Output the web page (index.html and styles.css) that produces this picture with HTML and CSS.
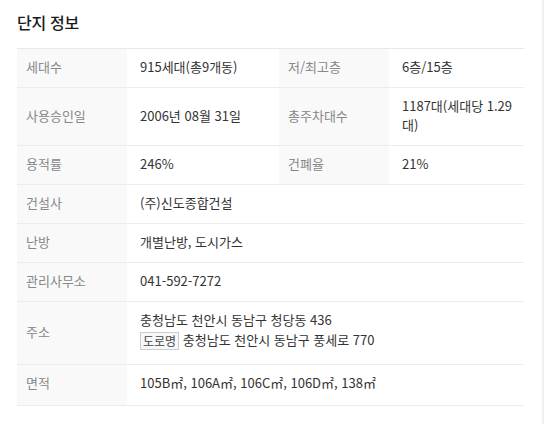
FILE: index.html
```html
<!DOCTYPE html>
<html lang="ko">
<head>
<meta charset="utf-8">
<link rel="stylesheet" href="styles.css">
</head>
<body>
<div class="panel">
  <h2 class="title">단지 정보</h2>
  <table class="info">
    <colgroup>
      <col class="c-label"><col class="c-value1"><col class="c-label"><col class="c-value2">
    </colgroup>
    <tr>
      <th>세대수</th><td>915세대(총9개동)</td>
      <th>저/최고층</th><td>6층/15층</td>
    </tr>
    <tr>
      <th>사용승인일</th><td>2006년 08월 31일</td>
      <th>총주차대수</th><td>1187대(세대당 1.29 대)</td>
    </tr>
    <tr>
      <th>용적률</th><td>246%</td>
      <th>건폐율</th><td>21%</td>
    </tr>
    <tr>
      <th>건설사</th><td colspan="3">(주)신도종합건설</td>
    </tr>
    <tr>
      <th>난방</th><td colspan="3">개별난방, 도시가스</td>
    </tr>
    <tr>
      <th>관리사무소</th><td colspan="3">041-592-7272</td>
    </tr>
    <tr class="addr-row">
      <th>주소</th>
      <td colspan="3">
        <div>충청남도 천안시 동남구 청당동 436</div>
        <div class="road"><span class="badge">도로명</span> 충청남도 천안시 동남구 풍세로 770</div>
      </td>
    </tr>
    <tr class="last-row">
      <th>면적</th><td colspan="3">105B㎡, 106A㎡, 106C㎡, 106D㎡, 138㎡</td>
    </tr>
  </table>
</div>
</body>
</html>
```
FILE: styles.css
```css
html, body {
  margin: 0;
  padding: 0;
  background: #fff;
}
body {
  font-family: "Noto Sans CJK KR", "Noto Sans", sans-serif;
  color: #333;
}
.panel {
  width: 544px;
  height: 424px;
  box-sizing: border-box;
  border-right: 2px solid #f0f0f0;
  padding: 11px 18px 0 17px;
}
.title {
  margin: 0 0 15px;
  font-size: 16px;
  line-height: 22px;
  font-weight: 500;
  color: #1a1a1a;
  letter-spacing: -0.3px;
}
.info {
  width: 507px;
  border-collapse: separate;
  border-spacing: 0;
  border-top: 1px solid #e8e8e8;
  table-layout: fixed;
  font-size: 13px;
  line-height: 19px;
}
.c-label { width: 110px; }
.c-value1 { width: 152px; }
.c-value2 { width: 135px; }
.info th,
.info td {
  border-bottom: 1px solid #ececec;
  vertical-align: middle;
  padding-top: 8px;
  padding-bottom: 11px;
}
.info th {
  background: #f9f9f9;
  color: #888;
  font-weight: 400;
  text-align: left;
  padding-left: 9px;
  padding-right: 8px;
}
.info td {
  color: #333;
  padding-left: 13px;
  padding-right: 10px;
}
.addr-row td {
  padding-top: 8px;
  padding-bottom: 14px;
}
.last-row th,
.last-row td {
  padding-top: 8px;
  padding-bottom: 13px;
}
.road {
  line-height: 21px;
}
.badge {
  display: inline-block;
  font-size: 12px;
  line-height: 16px;
  padding: 0 2px;
  border: 1px solid #ccc;
  background: #f8f8f8;
  color: #444;
  vertical-align: middle;
}
```
